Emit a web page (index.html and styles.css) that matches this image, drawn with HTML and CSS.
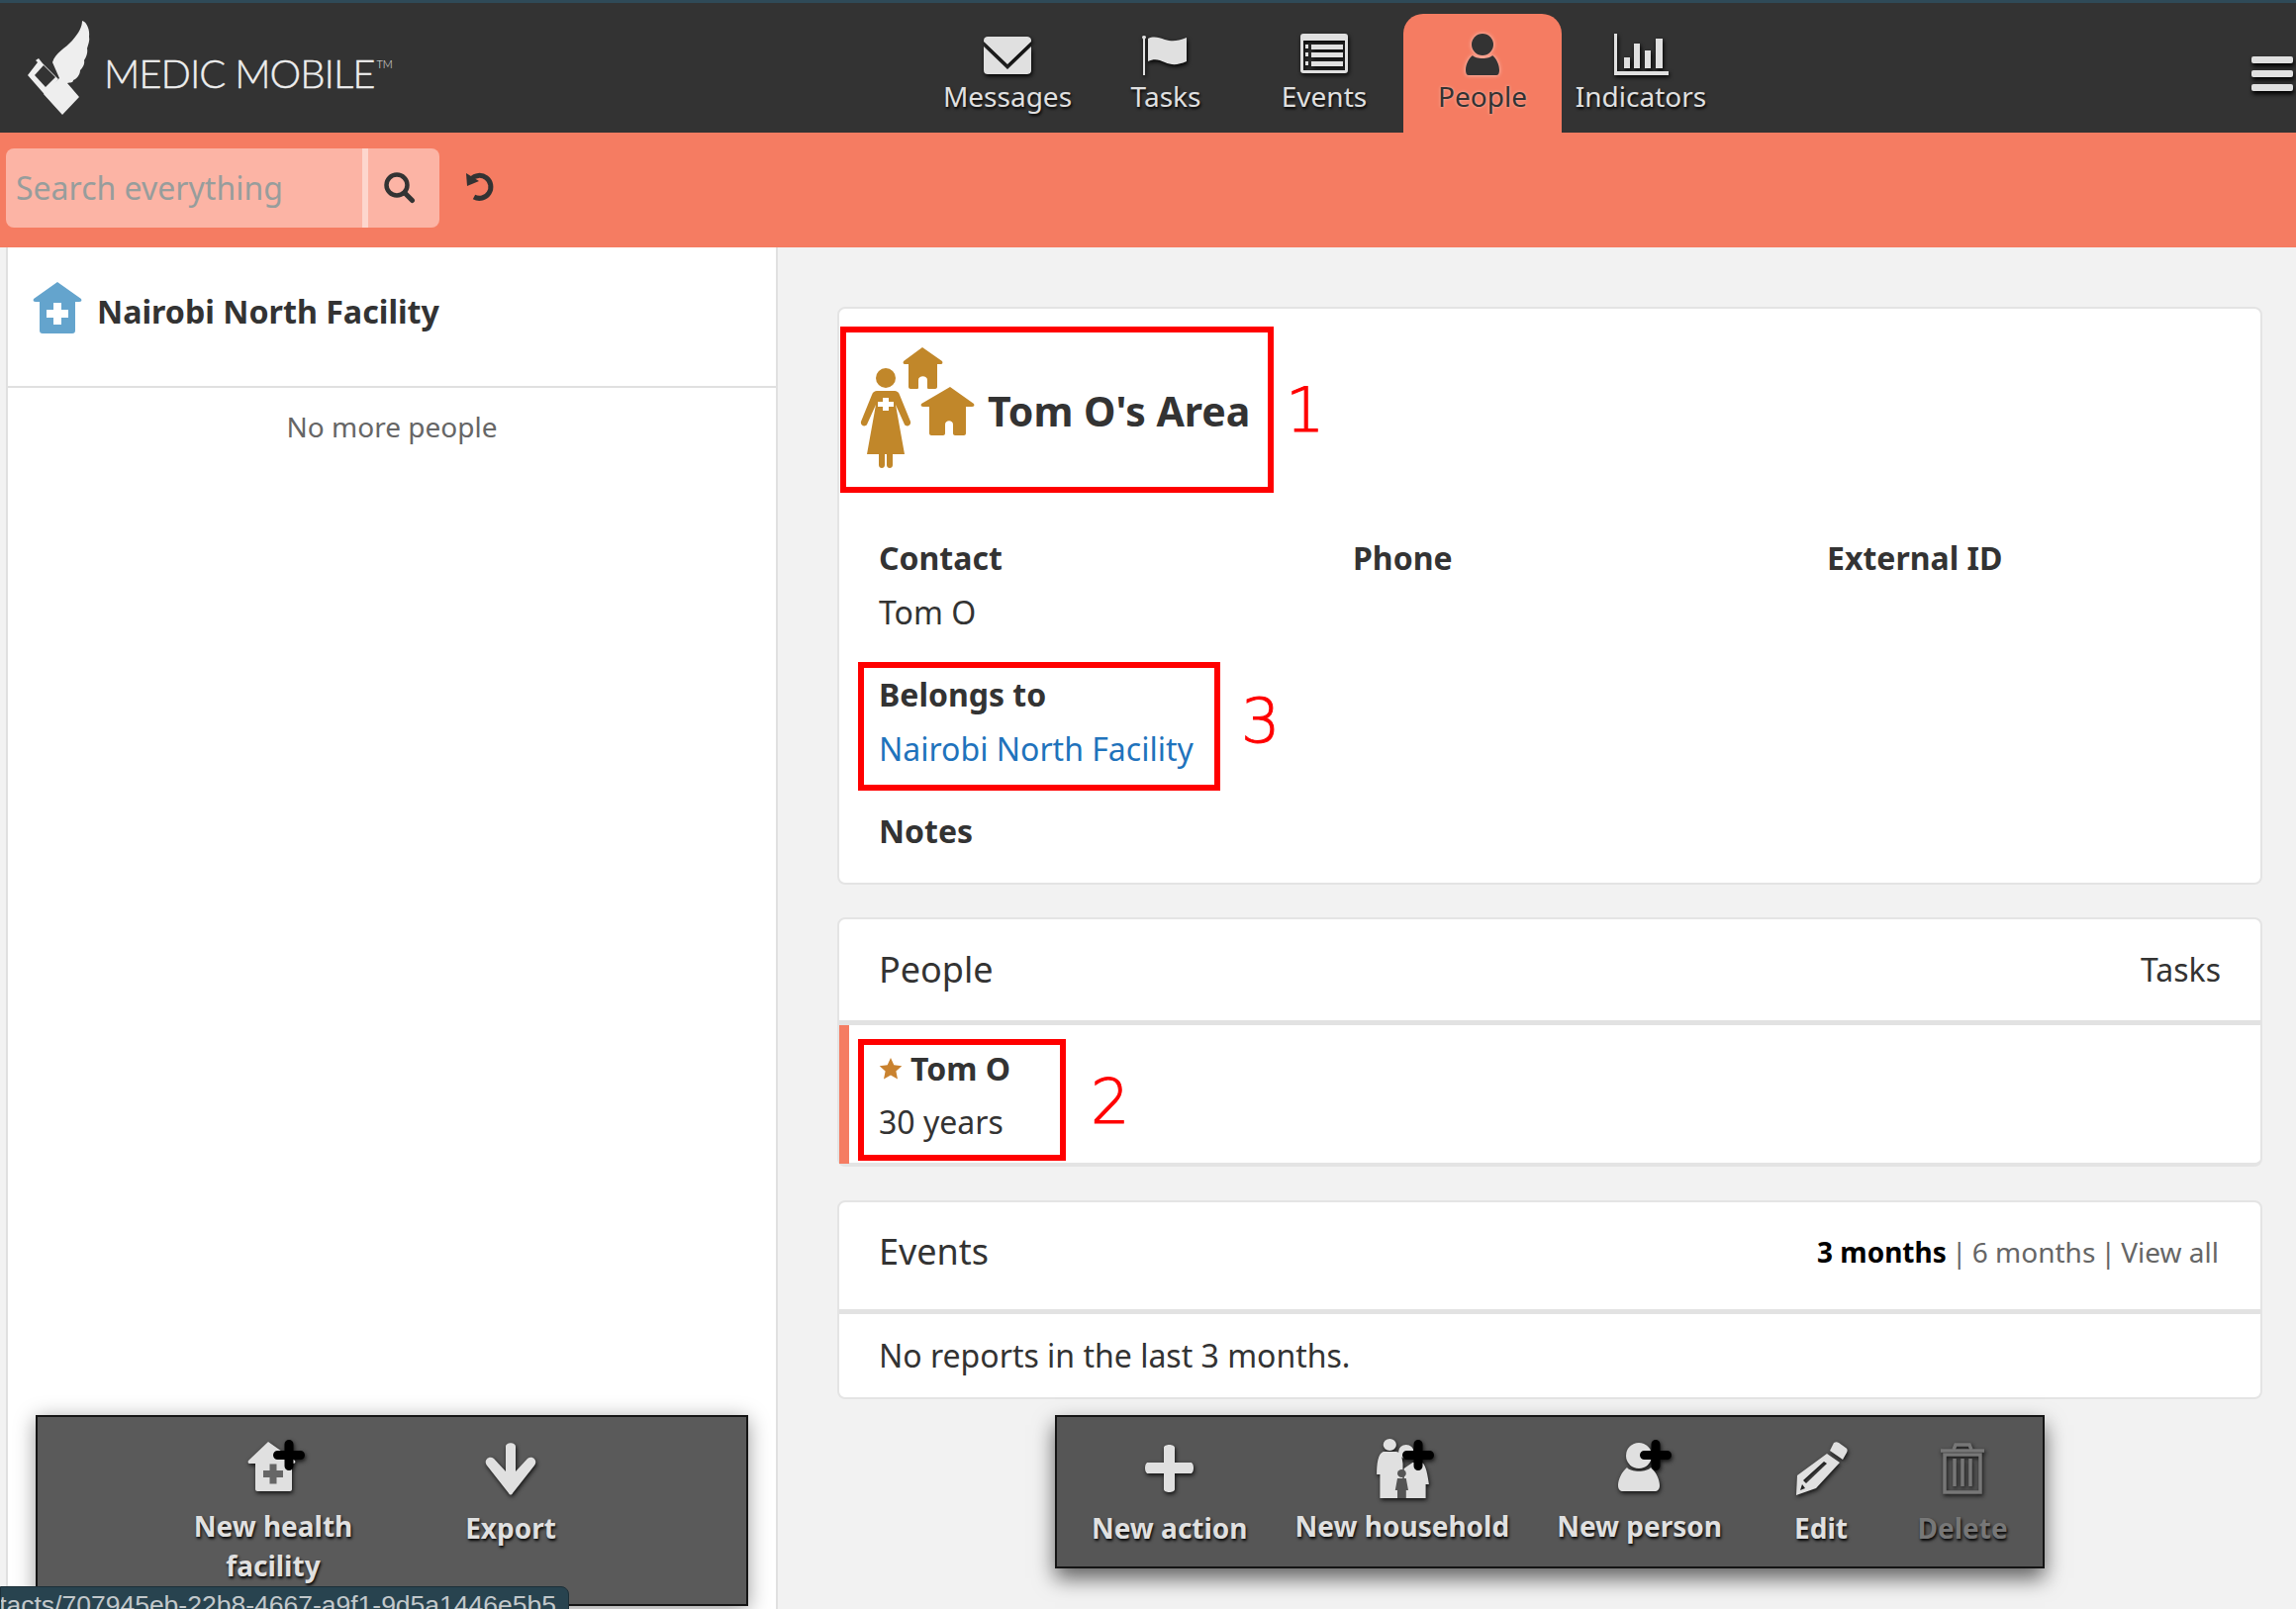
FILE: index.html
```html
<!DOCTYPE html>
<html>
  <head>
    <title>Medic Mobile - People</title>
    <link rel="stylesheet" href="styles.css">
  </head>
  <body>
    <header class="header">
      <div class="logo">
        <svg class="logo-mark" width="65" height="96" viewBox="27 20 65 96">
          <path fill="#eee" d="M53 62C56 52 66 48 73 40 80 32 83 26 83 20 88 21 91 30 90 36 91 40 89 44 88 48 89 52 87 57 85 60 86 64 83 68 81 70 81 75 77 79 74 80 74 83 71 82 68 83L80 97 63 115 44 94 60 78z"/>
          <path fill="#eee" d="M28 75L63 115 46 95 59 79 43 63 39 58 36 60 38 62z"/>
          <path fill="#333" d="M35 75L44 65 56 77 46 87z"/>
        </svg>
        <span class="logo-text">MEDIC MOBILE<sup class="tm">TM</sup></span>
      </div>
      <nav class="tabs">
        <a class="tab">
          <svg class="tab-icon" width="50" height="42" viewBox="0 0 50 42"><path fill="#e0e0e0" d="M5 3h39c3 0 5 1 5 4v1L25 31 1 8V7c0-3 2-4 4-4zM1 13l24 23 24-23v24c0 3-2 4-5 4H5c-2 0-4-1-4-4z"/></svg>
          <span>Messages</span>
        </a>
        <a class="tab">
          <svg class="tab-icon" width="50" height="42" viewBox="0 0 50 42"><path fill="#e0e0e0" d="M1 3a2.500 2.500 0 0 1 4 0c0 1-.5 2-1 2.500V42H2V5.500C1.500 5 1 4 1 3zM7 5c6-3 11-1 17 1 7 2 12 2 22-2v24c-9 4-15 4-22 1-6-3-11-4-17-1z"/></svg>
          <span>Tasks</span>
        </a>
        <a class="tab">
          <svg class="tab-icon" width="50" height="42" viewBox="0 0 50 42"><path fill="#e0e0e0" fill-rule="evenodd" d="M4 0h42c2 0 3 1 3 3v34c0 2-1 3-3 3H4c-2 0-3-1-3-3V3c0-2 1-3 3-3zM4 7v30h42V7z"/><path fill="#e0e0e0" d="M6 11h3v4H6zM12 11h32v5H12zM6 19h3v4H6zM12 19h32v5H12zM6 28h3v4H6zM12 28h32v5H12z"/></svg>
          <span>Events</span>
        </a>
        <a class="tab tab-active">
          <svg class="tab-icon" width="50" height="42" viewBox="0 0 50 42"><ellipse fill="#333" cx="25" cy="11" rx="11" ry="11"/><path fill="#333" d="M15 22c3 4 17 4 20 0 4 3 7 9 7 15 0 3-1 5-3 5H11c-2 0-3-2-3-5 0-6 3-12 7-15z"/></svg>
          <span>People</span>
        </a>
        <a class="tab">
          <svg class="tab-icon" width="56" height="42" viewBox="0 0 56 42"><path fill="#e0e0e0" d="M1 0h3v38h52v4H1zM11 24h6v11h-6zM21 10h6v25h-6zM32 17h6v18h-6zM43 5h7v30h-7z"/></svg>
          <span>Indicators</span>
        </a>
      </nav>
      <div class="hamburger"><span></span><span></span><span></span></div>
    </header>

    <div class="searchbar">
      <div class="search">
        <div class="search-input">Search everything</div>
        <div class="search-btn">
          <svg width="32" height="32" viewBox="0 0 32 32"><circle cx="13" cy="13" r="10.500" fill="none" stroke="#333" stroke-width="4.500"/><path d="M21 21L28.500 28.500" stroke="#333" stroke-width="5" stroke-linecap="round"/></svg>
        </div>
      </div>
      <svg class="reset" width="30" height="30" viewBox="0 0 30 30"><path d="M6 7A11.500 11.500 0 1 1 9 25" fill="none" stroke="#333" stroke-width="5"/><path fill="#333" d="M1 1l1 13 12-5z"/></svg>
    </div>

    <main class="main">
      <section class="left-pane">
        <div class="left-head">
          <svg width="50" height="52" viewBox="0 0 50 52"><path fill="#64a4cd" d="M25 0l24 17c1 2 0 3-2 3h-4v29c0 2-1 3-3 3H10c-2 0-3-1-3-3V20H3c-2 0-3-1-2-3z"/><path fill="#fff" d="M21 21h8v7h7v8h-7v7h-8v-7h-7v-8h7z"/></svg>
          <span>Nairobi North Facility</span>
        </div>
        <p class="no-more">No more people</p>
        <div class="toolbar toolbar-left">
          <div class="action action-add action-wide">
            <svg width="64" height="60" viewBox="0 0 64 60"><path fill="#e0e0e0" d="M27 3l27 19c1 2 0 3-2 3h-1v26c0 1-1 2-2 2H16c-1 0-2-1-2-2V25H9c-2 0-3-1-2-3z"/><path fill="#666" d="M28.500 25.500h7v6.500h6.500v7h-6.500v6.500h-7v-6.500h-6.500v-7h6.500z"/><path class="plus" d="M48 5.500v22M36.500 16.500h23"/></svg>
            <span>New health facility</span>
          </div>
          <div class="action action-wide">
            <svg width="54" height="56" viewBox="0 0 54 56"><path fill="#e0e0e0" d="M22 6c0-5 10-5 10 0v25l12-13c5-4 11 2 7 7L29 53c-1 2-3 2-4 0L3 25c-4-5 2-11 7-7l12 13z"/></svg>
            <span>Export</span>
          </div>
        </div>
      </section>

      <section class="right-pane">
        <article class="card card-place">
          <div class="place-head">
            <svg width="118" height="122" viewBox="0 0 118 122">
              <g fill="#c1872a">
                <circle cx="27" cy="31" r="10"/>
                <path d="M18 44h18c2 0 4 1 5 4l11 27c1 4-4 6-6 3L37 58l9 50H34v11c0 4-6 4-6 0v-11h-2v11c0 4-6 4-6 0v-11H8l9-50L8 78c-2 3-7 1-6-3l11-27c1-3 3-4 5-4z"/>
                <path d="M64 0l20 14c1 2 0 3-1 3h-4v23c0 1-1 2-2 2h-7c-1 0-1-1-1-2v-7c0-5-9-5-9 0v7c0 1 0 2-1 2h-7c-1 0-2-1-2-2V17h-4c-1 0-2-1-1-3z"/>
                <path d="M92 40l24 17c1 2 0 3-2 3h-6v27c0 1-1 2-2 2H97c-1 0-2-1-2-2v-9c0-5-8-5-8 0v9c0 1-1 2-2 2H73c-1 0-2-1-2-2V60h-6c-2 0-3-1-2-3z"/>
              </g>
              <path fill="#fff" d="M24 51h6v4h5v5h-5v4h-6v-4h-5v-5h5z"/>
            </svg>
            <h2 class="place-title">Tom O's Area</h2>
          </div>
          <div class="fields">
            <div class="field"><b>Contact</b><span>Tom O</span></div>
            <div class="field"><b>Phone</b></div>
            <div class="field"><b>External ID</b></div>
          </div>
          <div class="field field-single field-belongs"><b>Belongs to</b><a class="link">Nairobi North Facility</a></div>
          <div class="field field-single field-notes"><b>Notes</b></div>
        </article>

        <article class="card card-people">
          <div class="card-head">
            <h3>People</h3>
            <span class="card-head-side">Tasks</span>
          </div>
          <div class="person-row">
            <div class="person-name">
              <svg width="24" height="24" viewBox="0 0 24 24"><path fill="#c9822f" d="M12 1l3.300 7.300 8 .9-5.900 5.400 1.600 7.900-7-4-7 4 1.600-7.900L.7 9.200l8-.9z"/></svg>
              <b>Tom O</b>
            </div>
            <div class="person-age">30 years</div>
          </div>
        </article>

        <article class="card card-events">
          <div class="card-head card-head-events">
            <h3>Events</h3>
            <span class="range"><b>3 months</b> <span class="sep">|</span> 6 months <span class="sep">|</span> View all</span>
          </div>
          <p class="no-reports">No reports in the last 3 months.</p>
        </article>

        <div class="toolbar toolbar-right">
          <div class="action">
            <svg width="50" height="48" viewBox="0 0 50 48"><path fill="#e0e0e0" d="M19 3c0-4 11-4 11 0v15h16c4 0 4 11 0 11H30v16c0 4-11 4-11 0V29H3c-4 0-4-11 0-11h16z"/></svg>
            <span>New action</span>
          </div>
          <div class="action action-add">
            <svg width="64" height="60" viewBox="0 0 64 60"><g fill="#e0e0e0" transform="translate(5 0) scale(1.100 1)"><circle cx="13" cy="6" r="6"/><path d="M7 13h12c5 1 5 5 6 12v35H4V36H1c0-10 1-21 6-23z"/><circle cx="28" cy="13" r="7"/><path d="M34 24h8c3 1 5 6 7 22h-3v14H26V30z"/></g><g fill="#555" transform="translate(5 0) scale(1.100 1)"><circle cx="24" cy="35" r="4"/><path d="M20 40h8l2 12h-2v8h-8v-8h-2z" /></g><path class="plus" d="M48 5.500v22M36.500 16.500h23"/></svg>
            <span>New household</span>
          </div>
          <div class="action action-add">
            <svg width="64" height="60" viewBox="0 0 64 60"><ellipse fill="#e0e0e0" cx="31" cy="17" rx="13" ry="13"/><path fill="#e0e0e0" d="M19 29c4 5 20 5 24 0 5 4 9 12 9 18 0 4-2 6-5 6H15c-3 0-5-2-5-6 0-6 4-14 9-18z"/><path class="plus" d="M48 5.500v22M36.500 16.500h23"/></svg>
            <span>New person</span>
          </div>
          <div class="action action-fixed action-edit">
            <svg width="54" height="54" viewBox="0 0 54 54"><path fill="#e0e0e0" fill-rule="evenodd" d="M40 1c2-1 3-1 5 0l7 5c2 1 2 3 1 5l-4 7-13-9zM33 12l13 9-24 26-20 7 1-20zM30 20L9 39l3 3 21-20zM8 43l-2 6 5-2z"/></svg>
            <span>Edit</span>
          </div>
          <div class="action action-fixed action-disabled">
            <svg width="46" height="54" viewBox="0 0 46 54"><g fill="none" stroke="#777" stroke-width="3.500"><path d="M14 8l2-5h14l2 5"/><path d="M1 9h44"/><path d="M5 13h36v38H5z"/><path d="M15 17v28M23 17v28M31 17v28"/></g></svg>
            <span>Delete</span>
          </div>
        </div>
      </section>
    </main>

    <div class="mark mark-1"></div>
    <div class="mark mark-2"></div>
    <div class="mark mark-3"></div>
    <span class="mark-num num-1">1</span>
    <span class="mark-num num-2">2</span>
    <span class="mark-num num-3">3</span>
    <div class="status-url"><span>tacts/707945eb-22b8-4667-a9f1-9d5a1446e5b5</span></div>
  </body>
</html>
```

FILE: styles.css
```css
* {
  box-sizing: border-box;
}

html,
body {
  margin: 0;
  height: 1626px;
  overflow: hidden;
}

body {
  position: relative;
  font-family: "Noto Sans", Arial, sans-serif;
  font-size: 32px;
  color: #333;
  background-color: #f2f2f2;
}

.header {
  display: flex;
  height: 134px;
  background-color: #333;
  border-top: 3px solid #2f4a58;
  position: relative;
}

.logo {
  width: 938px;
  flex: none;
  display: flex;
  align-items: center;
  padding-left: 27px;
}

.logo-mark {
  flex: none;
}

.logo-text {
  font-family: Lato, sans-serif;
  font-weight: 300;
  font-size: 40px;
  letter-spacing: -1px;
  -webkit-text-stroke: 0.4px #eee;
  color: #eee;
  margin: 10px 0 0 13px;
  white-space: nowrap;
}

.tm {
  font-size: 11px;
  letter-spacing: 0;
  -webkit-text-stroke: 0;
  vertical-align: 20px;
  line-height: 0;
  margin-left: 2px;
}

.tabs {
  display: flex;
  align-items: flex-end;
  height: 131px;
}

.tab {
  width: 160px;
  height: 120px;
  display: flex;
  flex-direction: column;
  align-items: center;
  padding-top: 20px;
  color: #e0e0e0;
  font-size: 28px;
  line-height: 40px;
  text-shadow: 1px 2px 3px #000;
  border-radius: 20px 20px 0 0;
}

.tab span {
  margin-top: 1px;
}

.tab-icon {
  filter: drop-shadow(1px 2px 2px #000);
  flex: none;
}

.tab-active {
  background-color: #f57c62;
  color: #333;
  text-shadow: 0 0 3px rgba(255, 255, 255, 0.5);
}

.tab-active .tab-icon {
  filter: drop-shadow(0 0 2px rgba(255, 255, 255, 0.6));
}

.hamburger {
  position: absolute;
  top: 54px;
  right: 3px;
  width: 42px;
  display: flex;
  flex-direction: column;
  gap: 7px;
}

.hamburger span {
  height: 7px;
  border-radius: 2px;
  background-color: #e0e0e0;
  box-shadow: 1px 3px 4px #000;
}

.searchbar {
  height: 116px;
  background-color: #f57c62;
  display: flex;
  align-items: flex-start;
  padding: 16px 0 0 6px;
}

.search {
  display: flex;
  width: 438px;
  height: 80px;
  border-radius: 8px;
  background-color: #fcb4a5;
  overflow: hidden;
}

.search-input {
  width: 360px;
  padding-left: 10px;
  font-size: 32px;
  line-height: 79px;
  color: #979d9c;
  white-space: nowrap;
}

.search-btn {
  flex: 1;
  display: flex;
  align-items: center;
  justify-content: flex-start;
  padding-left: 16px;
  border-left: 6px solid #fdd6cd;
}

.reset {
  margin: 24px 0 0 26px;
}

.main {
  display: flex;
  height: 1376px;
}

.left-pane {
  position: relative;
  margin-left: 6px;
  width: 780px;
  flex: none;
  background-color: #fff;
  border-right: 2px solid #e0e0e0;
  border-left: 2px solid #e0e0e0;
}

.left-head {
  display: flex;
  align-items: center;
  gap: 15px;
  height: 142px;
  padding: 0 0 11px 25px;
  border-bottom: 2px solid #e0e0e0;
  font-weight: bold;
  font-size: 32.200px;
}

.left-head svg {
  margin-bottom: 8px;
}

.no-more {
  margin: 20px 0 0;
  text-align: center;
  font-size: 28px;
  line-height: 38px;
  color: #666;
}

.right-pane {
  position: relative;
  flex: 1;
  min-width: 0;
  padding: 60px 34px 0 60px;
}

.card {
  background-color: #fff;
  border: 2px solid #e4e4e4;
  border-radius: 8px;
  margin-bottom: 34px;
}

.card-place {
  height: 584px;
  padding-top: 39px;
  margin-bottom: 33px;
}

.card-people {
  height: 252px;
  border-bottom-width: 4px;
}

.card-events {
  height: 201px;
}

.place-head {
  display: flex;
  align-items: center;
  padding-left: 20px;
  height: 122px;
}

.place-title {
  margin: 5px 0 0 12px;
  font-size: 41px;
  font-weight: bold;
}

.fields {
  display: grid;
  grid-template-columns: 479px 479px auto;
  padding: 63px 0 0 40px;
}

.field {
  display: flex;
  flex-direction: column;
  line-height: 55px;
}

.field-single {
  padding-left: 40px;
}

.field-belongs {
  margin-top: 28px;
}

.field-notes {
  margin-top: 28px;
}

.link {
  color: #1f73bc;
}

.card-head {
  display: flex;
  align-items: center;
  justify-content: space-between;
  height: 107px;
  padding: 0 40px 2px;
  border-bottom: 5px solid #e2e2e2;
}

.card-head h3 {
  margin: 0;
  font-size: 36px;
  font-weight: normal;
}

.card-head-events {
  height: 113px;
  padding-bottom: 9px;
  padding-right: 42px;
}

.range {
  font-size: 28px;
  color: #666;
}

.range b {
  color: #000;
}

.sep {
  margin: 0 -2px;
}

.card-head-side {
  font-size: 32px;
}

.person-row {
  height: 140px;
  padding: 17px 0 0 30px;
  border-left: 10px solid #f57c62;
  line-height: 54px;
}

.person-name {
  display: flex;
  align-items: center;
  gap: 8px;
}

.no-reports {
  margin: 20px 0 0;
  padding-left: 40px;
  line-height: 44px;
}

.toolbar {
  position: absolute;
  display: flex;
  justify-content: center;
  background-color: #565656;
  border: 2px solid #151515;
  color: #e0e0e0;
  font-size: 28px;
  font-weight: bold;
  text-align: center;
  line-height: 40px;
  text-shadow: 1px 2px 3px #000;
}

.toolbar svg {
  filter: drop-shadow(1px 2px 2px #111);
  display: block;
  flex: none;
}

.plus {
  fill: none;
  stroke: #000;
  stroke-width: 9;
  stroke-linecap: round;
}

.toolbar-left {
  top: 1180px;
  left: 28px;
  width: 720px;
  height: 193px;
  background-color: #5a5a5a;
  box-shadow: 0 4px 20px rgba(0, 0, 0, 0.4);
}

.toolbar-right {
  top: 1180px;
  left: 280px;
  width: 1000px;
  height: 155px;
  padding-left: 3px;
  white-space: nowrap;
  box-shadow: 0 10px 20px rgba(0, 0, 0, 0.6);
}

.action {
  display: flex;
  flex-direction: column;
  align-items: center;
  padding: 22px 24px 0;
}

.action svg {
  height: 60px;
  margin-bottom: 10px;
}

.action-add svg {
  margin-bottom: 8px;
}

.action-wide {
  width: 240px;
  padding: 22px 10px 0;
}

.action-fixed {
  width: 146px;
  padding: 22px 0 0;
}

.action-edit {
  padding-left: 6px;
}

.action-disabled {
  color: #777;
}

.mark {
  position: absolute;
  border: 6px solid #f00;
  pointer-events: none;
}

.mark-1 {
  left: 849px;
  top: 330px;
  width: 438px;
  height: 168px;
}

.mark-2 {
  left: 867px;
  top: 1050px;
  width: 210px;
  height: 123px;
}

.mark-3 {
  left: 867px;
  top: 669px;
  width: 366px;
  height: 130px;
}

.mark-num {
  position: absolute;
  font-family: "DejaVu Sans", sans-serif;
  font-weight: 200;
  -webkit-text-stroke: 1px #f00;
  font-size: 62px;
  line-height: 72px;
  color: #f00;
}

.num-1 {
  left: 1299px;
  top: 379px;
}

.num-2 {
  left: 1102px;
  top: 1078px;
}

.num-3 {
  left: 1254px;
  top: 693px;
}

.status-url {
  position: absolute;
  left: 0;
  top: 1603px;
  width: 575px;
  height: 30px;
  display: flex;
  justify-content: flex-end;
  padding: 3px 12px 0 0;
  background-color: #28434f;
  border-radius: 0 8px 0 0;
  border: 1px solid #1c2f38;
  color: #c2c8cb;
  font-family: "Liberation Sans", Arial, sans-serif;
  font-size: 26.500px;
  white-space: nowrap;
  overflow: hidden;
}

.status-url span {
  flex: none;
}
```
